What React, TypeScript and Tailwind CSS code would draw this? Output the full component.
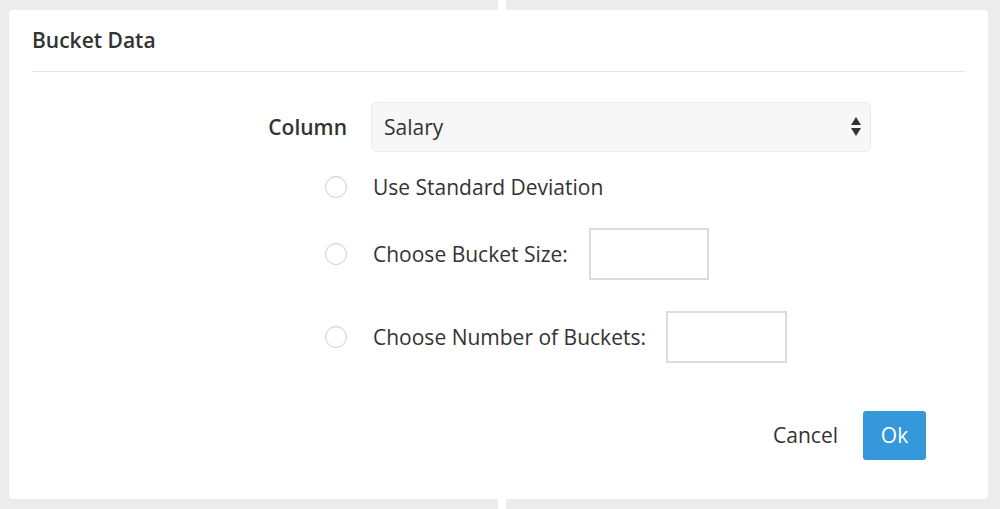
import React from 'react';

function Radio() {
  return (
    <span className="block w-[22px] h-[22px] rounded-full border border-[#cfcfcf] bg-white shadow-[inset_0_1px_1px_rgba(0,0,0,0.06)]" />
  );
}

function SelectArrows() {
  return (
    <svg width="10" height="20" viewBox="0 0 10 20" className="text-[#333]">
      <path d="M5 0 L10 8 L0 8 Z" fill="currentColor" />
      <path d="M0 11 L10 11 L5 19 Z" fill="currentColor" />
    </svg>
  );
}

export default function App() {
  return (
    <div
      className="relative w-[1000px] h-[509px] overflow-hidden bg-white text-[#333]"
      style={{ fontFamily: '"Open Sans", "Noto Sans", sans-serif' }}
    >
      <div className="flex h-full gap-[8px]">
        <div className="w-[498px] h-full bg-[#ececec]" />
        <div className="flex-1 h-full bg-[#ececec]" />
      </div>

      <div className="absolute left-[9px] top-[10px] w-[979px] h-[489px] bg-white rounded-[4px] flex flex-col">
        <div className="mx-[23px] h-[62px] flex items-center border-b border-[#e5e5e5]">
          <h1 className="text-[21px] font-semibold leading-none">Bucket Data</h1>
        </div>

        <div className="flex flex-col">
          <div className="flex items-center mt-[30px] h-[50px]">
            <div className="w-[338px] flex justify-end pt-[2px]">
              <span className="text-[21px] font-semibold">Column</span>
            </div>
            <div className="ml-[24px] w-[500px] h-[50px] flex items-center justify-between rounded-[6px] border border-[#ebebeb] bg-[#f7f7f7] pl-[12px] pr-[9px]">
              <span className="text-[21px] pt-[2px]">Salary</span>
              <SelectArrows />
            </div>
          </div>

          <div className="flex items-center mt-[20px] h-[30px]">
            <div className="w-[338px] flex justify-end">
              <Radio />
            </div>
            <span className="ml-[26px] text-[21px] pt-[1px]">Use Standard Deviation</span>
          </div>

          <div className="flex items-center mt-[26px] h-[52px]">
            <div className="w-[338px] flex justify-end">
              <Radio />
            </div>
            <span className="ml-[26px] text-[21px] pt-[1px]">Choose Bucket Size:</span>
            <div className="ml-[21px] w-[120px] h-[52px] border-2 border-[#dcdcdc] bg-white" />
          </div>

          <div className="flex items-center mt-[31px] h-[52px]">
            <div className="w-[338px] flex justify-end">
              <Radio />
            </div>
            <span className="ml-[26px] text-[21px] pt-[1px]">Choose Number of Buckets:</span>
            <div className="ml-[20px] w-[121px] h-[52px] border-2 border-[#dcdcdc] bg-white" />
          </div>

          <div className="flex items-center justify-end mt-[48px] mr-[62px] gap-[25px]">
            <button className="text-[21px] text-[#333]">Cancel</button>
            <button className="w-[63px] h-[49px] rounded-[3px] bg-[#3498db] text-white text-[21px]">Ok</button>
          </div>
        </div>
      </div>
    </div>
  );
}
